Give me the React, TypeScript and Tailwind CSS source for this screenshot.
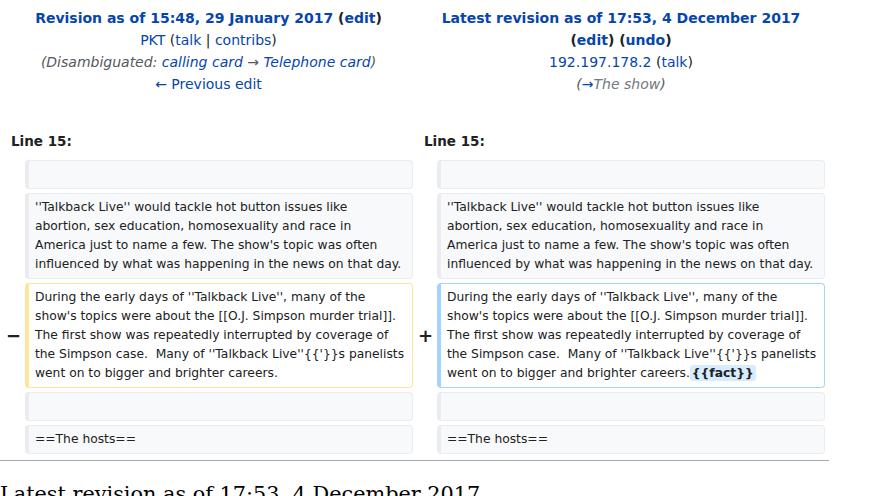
import React from "react"

const link = "text-[#0645ad]"

type Side = "del" | "add"

function Box({ children, kind }: { children?: React.ReactNode; kind?: Side }) {
    const border =
        kind === "del"
            ? "border-[#ffe49c] bg-white"
            : kind === "add"
              ? "border-[#a3d3ff] bg-white"
              : "border-[#eaecf0] bg-[#f8f9fa]"
    return (
        <div
            className={`min-h-[29px] rounded-[4px] border border-l-4 ${border} py-1 pr-[7px] pl-[6px] text-[12.3px] leading-[19px] break-words text-[#202122]`}
        >
            {children ?? "\u00a0"}
        </div>
    )
}

const para1 =
    "''Talkback Live'' would tackle hot button issues like abortion, sex education, homosexuality and race in America just to name a few. The show's topic was often influenced by what was happening in the news on that day."

const para2 =
    "During the early days of ''Talkback Live'', many of the show's topics were about the [[O.J. Simpson murder trial]]. The first show was repeatedly interrupted by coverage of the Simpson case.\u00a0 Many of ''Talkback Live''{{'}}s panelists went on to bigger and brighter careers."

export default function App() {
    return (
        <div className="h-[496px] w-[874px] overflow-hidden bg-white font-['DejaVu_Sans',sans-serif] text-[#202122]">
            <div className="w-[829px]">
                {/* Revision headers */}
                <div className="grid grid-cols-[409px_408px] gap-x-1 px-1 pt-[7px] text-center text-[14px] leading-[22px]">
                    <div>
                        <div className="font-bold">
                            <span className={link}>Revision as of 15:48, 29 January 2017</span> (
                            <span className={link}>edit</span>)
                        </div>
                        <div>
                            <span className={link}>PKT</span> (<span className={link}>talk</span> |{" "}
                            <span className={link}>contribs</span>)
                        </div>
                        <div className="text-[#54595d] italic">
                            (Disambiguated: <span className={link}>calling card</span> →{" "}
                            <span className={link}>Telephone card</span>)
                        </div>
                        <div>
                            <span className={link}>← Previous edit</span>
                        </div>
                    </div>
                    <div>
                        <div className="font-bold">
                            <span className={link}>Latest revision as of 17:53, 4 December 2017</span>
                        </div>
                        <div className="font-bold">
                            (<span className={link}>edit</span>) (<span className={link}>undo</span>)
                        </div>
                        <div>
                            <span className={link}>192.197.178.2</span> (<span className={link}>talk</span>)
                        </div>
                        <div className="text-[#54595d] italic">
                            (<span className={link}>→</span>
                            <span className="text-[#72777d]">The show</span>)
                        </div>
                    </div>
                </div>

                {/* Diff body */}
                <div className="mt-[36px] grid grid-cols-[17px_388px_16px_388px] gap-1 px-1">
                    <div className="col-span-2 pb-[5px] pl-[7px] text-[13.5px] leading-[20px] font-bold">Line 15:</div>
                    <div className="col-span-2 pb-[5px] pl-[7px] text-[13.5px] leading-[20px] font-bold">Line 15:</div>

                    <div />
                    <Box />
                    <div />
                    <Box />

                    <div />
                    <Box>{para1}</Box>
                    <div />
                    <Box>{para1}</Box>

                    <div className="flex items-center justify-end text-[18px] font-bold">−</div>
                    <Box kind="del">{para2}</Box>
                    <div className="flex items-center justify-end text-[18px] font-bold">+</div>
                    <Box kind="add">
                        {para2}
                        <span className="rounded-[3px] bg-[#d8ecff] px-[2px] py-px font-bold">{"{{fact}}"}</span>
                    </Box>

                    <div />
                    <Box />
                    <div />
                    <Box />

                    <div />
                    <Box>==The hosts==</Box>
                    <div />
                    <Box>==The hosts==</Box>
                </div>

                <hr className="mt-[6px] border-t border-[#a2a9b1]" />
            </div>

            <h2 className="mt-[21px] font-['DejaVu_Serif',serif] text-[20.8px] leading-[24px] text-black">
                Latest revision as of 17:53, 4 December 2017
            </h2>
        </div>
    )
}
